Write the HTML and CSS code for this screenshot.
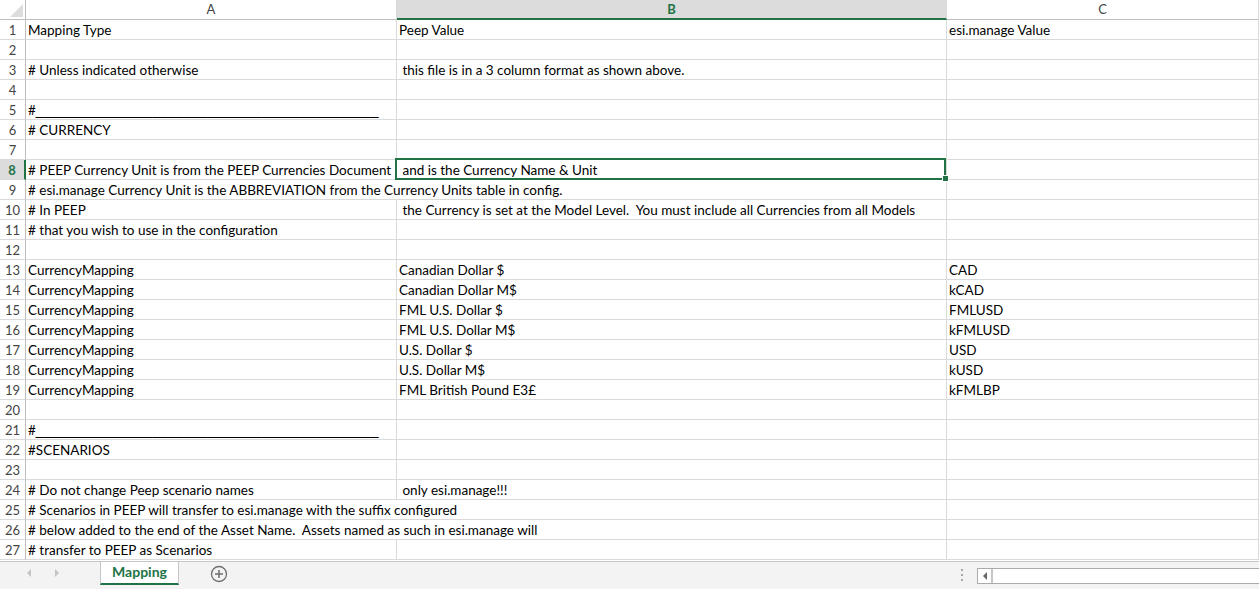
FILE: index.html
```html
<!DOCTYPE html>
<html>
<head>
<meta charset="utf-8">
<link rel="stylesheet" href="styles.css">
</head>
<body>
<div class="sheet">
  <div class="grid">
    <div class="corner"></div><div class="ch">A</div><div class="ch sel">B</div><div class="ch">C</div>

    <div class="rh">1</div><div class="cell">Mapping Type</div><div class="cell">Peep Value</div><div class="cell">esi.manage Value</div>
    <div class="rh">2</div><div class="cell"></div><div class="cell"></div><div class="cell"></div>
    <div class="rh">3</div><div class="cell"># Unless indicated otherwise</div><div class="cell"> this file is in a 3 column format as shown above.</div><div class="cell"></div>
    <div class="rh">4</div><div class="cell"></div><div class="cell"></div><div class="cell"></div>
    <div class="rh">5</div><div class="cell">#<span class="us">____________________________________________</span></div><div class="cell"></div><div class="cell"></div>
    <div class="rh">6</div><div class="cell"># CURRENCY</div><div class="cell"></div><div class="cell"></div>
    <div class="rh">7</div><div class="cell"></div><div class="cell"></div><div class="cell"></div>
    <div class="rh sel">8</div><div class="cell"># PEEP Currency Unit is from the PEEP Currencies Document</div><div class="cell active"> and is the Currency Name &amp; Unit</div><div class="cell"></div>
    <div class="rh">9</div><div class="cell span2"># esi.manage Currency Unit is the ABBREVIATION from the Currency Units table in config.</div><div class="cell"></div>
    <div class="rh">10</div><div class="cell"># In PEEP</div><div class="cell"> the Currency is set at the Model Level.  You must include all Currencies from all Models</div><div class="cell"></div>
    <div class="rh">11</div><div class="cell"># that you wish to use in the configuration</div><div class="cell"></div><div class="cell"></div>
    <div class="rh">12</div><div class="cell"></div><div class="cell"></div><div class="cell"></div>
    <div class="rh">13</div><div class="cell">CurrencyMapping</div><div class="cell">Canadian Dollar $</div><div class="cell">CAD</div>
    <div class="rh">14</div><div class="cell">CurrencyMapping</div><div class="cell">Canadian Dollar M$</div><div class="cell">kCAD</div>
    <div class="rh">15</div><div class="cell">CurrencyMapping</div><div class="cell">FML U.S. Dollar $</div><div class="cell">FMLUSD</div>
    <div class="rh">16</div><div class="cell">CurrencyMapping</div><div class="cell">FML U.S. Dollar M$</div><div class="cell">kFMLUSD</div>
    <div class="rh">17</div><div class="cell">CurrencyMapping</div><div class="cell">U.S. Dollar $</div><div class="cell">USD</div>
    <div class="rh">18</div><div class="cell">CurrencyMapping</div><div class="cell">U.S. Dollar M$</div><div class="cell">kUSD</div>
    <div class="rh">19</div><div class="cell">CurrencyMapping</div><div class="cell">FML British Pound E3£</div><div class="cell">kFMLBP</div>
    <div class="rh">20</div><div class="cell"></div><div class="cell"></div><div class="cell"></div>
    <div class="rh">21</div><div class="cell">#<span class="us">____________________________________________</span></div><div class="cell"></div><div class="cell"></div>
    <div class="rh">22</div><div class="cell">#SCENARIOS</div><div class="cell"></div><div class="cell"></div>
    <div class="rh">23</div><div class="cell"></div><div class="cell"></div><div class="cell"></div>
    <div class="rh">24</div><div class="cell"># Do not change Peep scenario names</div><div class="cell"> only esi.manage!!!</div><div class="cell"></div>
    <div class="rh">25</div><div class="cell span2"># Scenarios in PEEP will transfer to esi.manage with the suffix configured</div><div class="cell"></div>
    <div class="rh">26</div><div class="cell span2"># below added to the end of the Asset Name.  Assets named as such in esi.manage will</div><div class="cell"></div>
    <div class="rh">27</div><div class="cell"># transfer to PEEP as Scenarios</div><div class="cell"></div><div class="cell"></div>
  </div>

  <div class="tabbar">
    <div class="nav">
      <svg class="arrow" width="6" height="8" viewBox="0 0 6 8"><path d="M5 0 L1 4 L5 8 Z" fill="#c4c4c4"/></svg>
      <svg class="arrow" width="6" height="8" viewBox="0 0 6 8"><path d="M1 0 L5 4 L1 8 Z" fill="#c4c4c4"/></svg>
    </div>
    <div class="tab">Mapping</div>
    <svg class="plus" width="18" height="18" viewBox="0 0 18 18"><circle cx="9" cy="9" r="7.5" fill="none" stroke="#6f6f6f" stroke-width="1.3"/><path d="M9 5 V13 M5 9 H13" stroke="#6f6f6f" stroke-width="1.5"/></svg>
    <div class="spacer"></div>
    <div class="dots"><span></span><span></span><span></span></div>
    <div class="hscroll">
      <div class="sbtn"><svg width="6" height="8" viewBox="0 0 6 8"><path d="M5 0 L1 4 L5 8 Z" fill="#666"/></svg></div>
    </div>
  </div>
</div>
</body>
</html>
```

FILE: styles.css
```css
html, body {
  margin: 0;
  padding: 0;
  background: #fff;
  overflow: hidden;
}

body {
  font-family: Lato, "Liberation Sans", sans-serif;
}

.sheet {
  width: 1259px;
  height: 589px;
  display: flex;
  flex-direction: column;
  overflow: hidden;
}

.grid {
  display: grid;
  grid-template-columns: 26px 371px 550px 1fr;
  grid-auto-rows: 20px;
  height: 560px;
  flex: none;
  overflow: hidden;
}

.corner {
  position: relative;
  border-right: 1px solid #bdbdbd;
  border-bottom: 1px solid #bdbdbd;
  background: #fff;
}

.corner::after {
  content: "";
  position: absolute;
  right: 2px;
  bottom: 2px;
  width: 13px;
  height: 13px;
  background: #dcdcdc;
  clip-path: polygon(100% 0, 100% 100%, 0 100%);
}

.ch {
  border-right: 1px solid #dadada;
  border-bottom: 1px solid #bdbdbd;
  text-align: center;
  font-size: 13px;
  line-height: 19px;
  color: #444;
  background: #fff;
}

.ch.sel {
  background: #dcdcdc;
  color: #217346;
  font-weight: bold;
  border-bottom: 2px solid #217346;
  line-height: 18px;
}

.rh {
  border-right: 1px solid #bdbdbd;
  border-bottom: 1px solid #dadada;
  text-align: center;
  font-size: 13px;
  line-height: 19px;
  padding-top: 1px;
  box-sizing: border-box;
  color: #444;
  background: #fff;
}

.rh.sel {
  background: #dcdcdc;
  color: #217346;
  font-weight: bold;
  border-right: 2px solid #217346;
}

.cell {
  border-right: 1px solid #dadada;
  border-bottom: 1px solid #dadada;
  padding: 1px 0 0 2px;
  box-sizing: border-box;
  font-size: 13.5px;
  line-height: 19px;
  color: #000;
  white-space: pre;
  overflow: hidden;
}

.cell .us {
  font-family: "Liberation Sans", Arial, sans-serif;
  font-size: 14px;
}

.cell.span2 {
  grid-column: span 2;
}

.cell.active {
  position: relative;
  overflow: visible;
}

.cell.active::after {
  content: "";
  position: absolute;
  left: -2px;
  top: -2px;
  right: 0;
  bottom: -1px;
  border: 2px solid #217346;
  pointer-events: none;
}

.cell.active::before {
  content: "";
  position: absolute;
  right: -3px;
  bottom: -3px;
  width: 5px;
  height: 5px;
  background: #217346;
  border: 1px solid #fff;
  z-index: 2;
}

.tabbar {
  margin-top: 1px;
  height: 28px;
  flex: none;
  border-top: 1px solid #c6c6c6;
  background: #f3f3f3;
  display: flex;
  align-items: flex-start;
}

.nav {
  width: 100px;
  height: 22px;
  display: flex;
  align-items: center;
  padding-left: 26px;
  gap: 22px;
  box-sizing: border-box;
}

.arrow {
  display: block;
}

.tab {
  width: 77px;
  height: 21px;
  border-left: 1px solid #c6c6c6;
  border-right: 1px solid #c6c6c6;
  border-bottom: 2px solid #217346;
  background: #fff;
  color: #217346;
  font-weight: bold;
  font-size: 14px;
  line-height: 19px;
  text-align: center;
}

.plus {
  display: block;
  margin-left: 31px;
  margin-top: 3px;
}

.spacer {
  flex: 1;
}

.dots {
  display: flex;
  flex-direction: column;
  gap: 3px;
  margin-top: 7px;
  margin-right: 14px;
}

.dots span {
  display: block;
  width: 2px;
  height: 2px;
  background: #a6a6a6;
}

.hscroll {
  width: 288px;
  height: 14px;
  margin-top: 6px;
  margin-right: -8px;
  border: 1px solid #ababab;
  background: #fff;
  display: flex;
}

.sbtn {
  width: 13px;
  height: 14px;
  border-right: 2px solid #c6c6c6;
  display: flex;
  align-items: center;
  justify-content: center;
}

.sbtn svg {
  display: block;
}
```
